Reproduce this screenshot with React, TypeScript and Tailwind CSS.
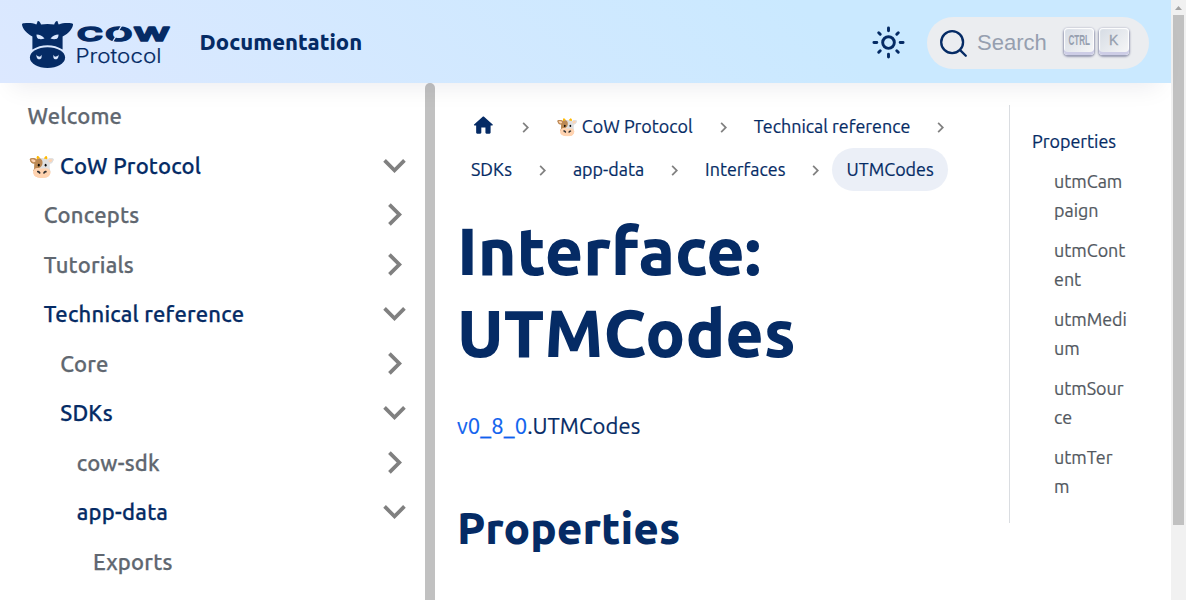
function Logo() {
  return (
    <svg viewBox="20 15 154 54" className="h-[54px] w-[154px] shrink-0 overflow-visible" fill="#052b65" aria-label="CoW Protocol">
      <path d="M22 24.6C22 23.7 22.8 23.3 24 23.3C28.500 22.800 33 23 36.300 24.500C37 23.500 37.200 22.300 37.500 21.400C37.800 20.700 38.700 20.800 39.300 21.500C40.500 22.700 40.800 24 41 24.500C45 23.800 50 23.800 54.200 24.500C54.400 23.500 54.900 22.400 55.800 21.500C56.500 20.800 57.300 20.700 57.600 21.400C57.900 22.500 58.200 23.600 58.800 24.500C62.500 23 67 22.800 71.300 23.300C72.600 23.400 73.100 23.800 73 24.700C72.600 28.500 68.800 33.500 62.600 36.400L62.600 49.500C58 46.800 53 45.300 47.500 45.300C42 45.300 37 46.800 32.400 49.500L32.400 36.400C26.200 33.500 22.400 28.600 22 24.600Z" />
      <path d="M36.500 34.500C39.500 34.600 42.500 36 44.500 38.400C42.200 39.300 39 39.500 37.600 38.200C36.700 37.200 36.500 35.800 36.500 34.500ZM58.500 34.500C55.500 34.600 52.500 36 50.500 38.400C52.800 39.300 56 39.500 57.400 38.200C58.300 37.200 58.500 35.800 58.500 34.500Z" fill="#dbe8ff" />
      <ellipse cx="47.500" cy="57.600" rx="17.600" ry="10.300" />
      <path d="M36.600 54.500C36 57 37.200 59.300 39.300 59.300C41.300 59.300 42.200 57 41.300 54.700C41 56 40.200 56.800 39 56.600C37.700 56.400 36.900 55.600 36.600 54.500ZM58.400 54.500C59 57 57.800 59.300 55.700 59.300C53.700 59.300 52.800 57 53.700 54.700C54 56 54.800 56.800 56 56.600C57.300 56.400 58.100 55.600 58.400 54.500Z" fill="#dbe8ff" />
      <text x="77" y="40.600" fontSize="19" fontWeight="600" textLength="95" lengthAdjust="spacingAndGlyphs" letterSpacing="1.200" stroke="#052b65" strokeWidth="1.500" strokeLinejoin="round" className="font-[Inter,sans-serif]">COW</text>
      <path d="M122 25L118 31.500M117 34.500L112.500 42" stroke="#dbe8ff" strokeWidth="1.300" fill="none" />
      <text x="75.500" y="62.700" fontSize="19.500" textLength="86" lengthAdjust="spacingAndGlyphs" fontWeight="300" stroke="#052b65" strokeWidth=".2" className="font-[Inter,sans-serif]">Protocol</text>
    </svg>
  );
}

function Sun() {
  return (
    <svg viewBox="0 0 24 24" className="mt-px size-[35px]" fill="none" stroke="#052b65" strokeWidth="2" strokeLinecap="round">
      <circle cx="12" cy="12" r="4" />
      <path d="M2 12h2M20 12h2M12 2v2M12 20v2M5.280 5.280l1.060 1.060M17.660 17.660l1.060 1.060M5.280 18.720l1.060-1.060M17.660 6.340l1.060-1.060" />
    </svg>
  );
}

function Key({ label }: { label: string }) {
  return (
    <span className="flex h-[27px] w-[30px] shrink-0 justify-center rounded-[4px] bg-[linear-gradient(-225deg,#d5dbe4,#f8f8f8)] shadow-[inset_0_-3px_0_0_#cdcde6,inset_0_0_1px_1px_#fff,0_1px_2px_1px_rgba(30,35,90,0.4)]">
      <svg viewBox="0 0 30 24" className="h-6 w-[30px] overflow-visible" fill="#969faf">
        {label === 'CTRL' ? (
          <text x="4.500" y="17.300" fontSize="14" fontWeight="700" textLength="21.500" lengthAdjust="spacingAndGlyphs" className="font-['Liberation_Sans_Narrow','Liberation_Sans',sans-serif]">CTRL</text>
        ) : (
          <text x="10" y="17" fontSize="14" fontWeight="400" stroke="#969faf" strokeWidth=".3" className="font-['Liberation_Sans',sans-serif]">K</text>
        )}
      </svg>
    </span>
  );
}

function Chevron({ open }: { open: boolean }) {
  return (
    <svg viewBox="0 0 24 24" className={open ? 'size-[45px] rotate-180' : 'size-[45px] rotate-90'} fill="#808080">
      <path d="M7.410 15.410L12 10.830l4.590 4.580L18 14l-6-6-6 6z" />
    </svg>
  );
}

function Separator() {
  return (
    <svg viewBox="0 0 24 24" className="mx-[6px] mt-px size-[21px] rotate-90" fill="#808080">
      <path d="M7.410 15.410L12 10.830l4.590 4.580L18 14l-6-6-6 6z" />
    </svg>
  );
}

function Crumb({ label, active = false }: { label: string; active?: boolean }) {
  return (
    <li className="flex items-center">
      <a className={active ? 'rounded-full bg-[#ebeff7] px-[14px] leading-[43px]' : 'px-[14px] leading-[43px]'}>{label}</a>
      {!active && <Separator />}
    </li>
  );
}

const items = [
  { label: 'Welcome', pad: 'pl-[27.500px]' },
  { label: '🐮 CoW Protocol', pad: 'pl-[27.500px]', open: true },
  { label: 'Concepts', pad: 'pl-[43.750px]', open: false },
  { label: 'Tutorials', pad: 'pl-[43.750px]', open: false },
  { label: 'Technical reference', pad: 'pl-[43.750px]', open: true },
  { label: 'Core', pad: 'pl-[60.250px]', open: false },
  { label: 'SDKs', pad: 'pl-[60.250px]', open: true },
  { label: 'cow-sdk', pad: 'pl-[76.750px]', open: false },
  { label: 'app-data', pad: 'pl-[76.750px]', open: true },
  { label: 'Exports', pad: 'pl-[93px]' },
];

const toc = [
  ['utmCam', 'paign'],
  ['utmCont', 'ent'],
  ['utmMedi', 'um'],
  ['utmSour', 'ce'],
  ['utmTer', 'm'],
];

export default function App() {
  return (
    <div className='flex h-[600px] w-[1186px] overflow-hidden bg-white font-["Ubuntu","Noto_Sans",sans-serif] text-[22px] text-[#052b65]'>
      <div className="flex w-[1171px] flex-col">
        <header className="z-10 flex h-[83px] shrink-0 items-center bg-[linear-gradient(45deg,#dce8ff_0%,#cae9ff_70%)] pl-5 shadow-[0_16px_24px_-12px_rgba(8,11,53,0.08)]">
          <Logo />
          <span className="ml-[25.500px] grow font-extrabold tracking-[0.04px]">Documentation</span>
          <Sun />
          <button className="ml-[21px] mr-[22px] mt-[3px] flex h-[52px] w-[222px] items-center rounded-full bg-[#ebedf0] pl-[12px]">
            <svg viewBox="0 0 20 20" className="size-[29px]" fill="none" stroke="#052b65" strokeWidth="1.600">
              <path d="M14.386 14.386l4.088 4.088-4.088-4.088c-2.942 2.942-7.711 2.942-10.653 0s-2.942-7.711 0-10.653 7.711-2.942 10.653 0 2.942 7.711 0 10.653z" strokeLinecap="round" strokeLinejoin="round" />
            </svg>
            <span className="-mt-px ml-[9px] mr-[17px] font-['Liberation_Sans',sans-serif] text-[22px] font-normal text-[#969faf]">Search</span>
            <span className="mb-[3px] flex gap-[5px]">
              <Key label="CTRL" />
              <Key label="K" />
            </span>
          </button>
        </header>

        <div className="flex min-h-0 grow">
          <aside className="w-[425px] shrink-0 pt-[7.750px]">
            <ul>
              {items.map((item) => (
                <li key={item.label} className={`${item.pad} flex h-[49.500px] items-center justify-between pr-[8px] font-medium tracking-[0.21px] [-webkit-text-stroke:0.25px] ${item.open ? 'text-[#052b65]' : 'text-[#606770]'}`}>
                  <a>{item.label}</a>
                  {item.open !== undefined && <Chevron open={item.open} />}
                </li>
              ))}
            </ul>
          </aside>
          <div className="w-[10px] shrink-0 rounded-t-[5px] bg-[#c1c1c1]" />

          <main className="w-[574px] shrink-0 pl-[22px] pt-[22px]">
            <ul className="flex w-[520px] flex-wrap text-[17.900px] [-webkit-text-stroke:0.2px]">
              <li className="flex h-[43px] items-center">
                <svg viewBox="0 0 24 24" className="mx-[13.500px] mb-[2px] size-[24.750px]" fill="#052b65">
                  <path d="M10 19v-5h4v5c0 .55.45 1 1 1h3c.55 0 1-.45 1-1v-7h1.700c.46 0 .68-.57.33-.87L12.670 3.600c-.38-.34-.96-.34-1.340 0l-8.360 7.530c-.34.3-.13.87.33.87H5v7c0 .55.45 1 1 1h3c.55 0 1-.45 1-1z" />
                </svg>
                <Separator />
              </li>
              <Crumb label="🐮 CoW Protocol" />
              <Crumb label="Technical reference" />
              <Crumb label="SDKs" />
              <Crumb label="app-data" />
              <Crumb label="Interfaces" />
              <Crumb label="UTMCodes" active />
            </ul>
            <h1 className="mt-[18px] text-[66px] font-extrabold leading-[82px]">Interface:<br />UTMCodes</h1>
            <p className="mt-[34px] leading-[37px] tracking-[0.1px] [-webkit-text-stroke:0.2px]"><a className="text-[#0f62ee]">v0_8_0</a>.UTMCodes</p>
            <h2 className="mt-[56px] text-[44px] font-extrabold leading-[56px]">Properties</h2>
          </main>

          <nav className="mt-[22px] h-[418px] w-[162px] border-l border-[#dadde1] pl-[22px] pt-[22px] text-[17.900px] leading-[29px] [-webkit-text-stroke:0.2px]">
            <a>Properties</a>
            <ul className="pl-[22px] pt-[11px] text-[#525860]">
              {toc.map(([first, rest]) => (
                <li key={first} className="mb-[11px]">{first}<br />{rest}</li>
              ))}
            </ul>
          </nav>
        </div>
      </div>

      <div className="flex w-[15px] flex-col items-center bg-[#f1f1f1]">
        <svg viewBox="0 0 15 15" className="size-[15px]" fill="#a3a3a3"><path d="M4 10l3.500-4L11 10z" /></svg>
        <div className="h-[510px] w-[11px] bg-[#c1c1c1]" />
      </div>
    </div>
  );
}
